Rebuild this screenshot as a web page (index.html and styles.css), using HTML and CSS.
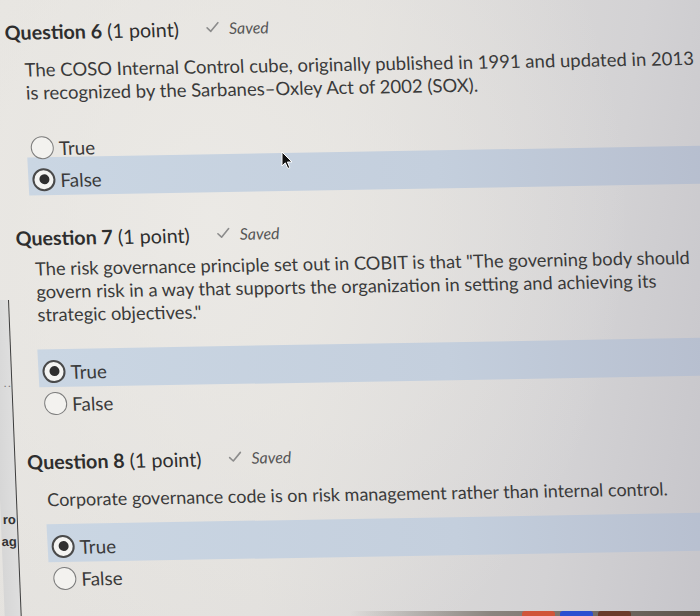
FILE: index.html
```html
<!DOCTYPE html>
<html lang="en">
<head>
<meta charset="utf-8">
<title>Quiz</title>
<link rel="stylesheet" href="styles.css">
</head>
<body>
<div class="screen">
  <div class="quiz">
    <section class="question q6">
      <div class="q-head">
        <h2 class="q-title"><span class="q-num">Question 6</span> (1 point)</h2>
        <span class="saved"><svg class="check" viewBox="0 0 14 12" width="14" height="12"><path d="M1.5 6.5 L5 10 L12.5 1.5" fill="none" stroke="#8c8c8c" stroke-width="1.6" stroke-linecap="round" stroke-linejoin="round"/></svg>Saved</span>
      </div>
      <p class="q-text">The COSO Internal Control cube, originally published in 1991 and updated in 2013<br>is recognized by the Sarbanes–Oxley Act of 2002 (SOX).</p>
      <ul class="answers">
        <li class="answer"><span class="radio"></span><span class="label">True</span></li>
        <li class="answer selected"><span class="radio"></span><span class="label">False</span></li>
      </ul>
    </section>

    <section class="question q7">
      <div class="q-head">
        <h2 class="q-title"><span class="q-num">Question 7</span> (1 point)</h2>
        <span class="saved"><svg class="check" viewBox="0 0 14 12" width="14" height="12"><path d="M1.5 6.5 L5 10 L12.5 1.5" fill="none" stroke="#8c8c8c" stroke-width="1.6" stroke-linecap="round" stroke-linejoin="round"/></svg>Saved</span>
      </div>
      <p class="q-text">The risk governance principle set out in COBIT is that "The governing body should<br>govern risk in a way that supports the organization in setting and achieving its<br>strategic objectives."</p>
      <ul class="answers">
        <li class="answer selected"><span class="radio"></span><span class="label">True</span></li>
        <li class="answer"><span class="radio"></span><span class="label">False</span></li>
      </ul>
    </section>

    <section class="question q8">
      <div class="q-head">
        <h2 class="q-title"><span class="q-num">Question 8</span> (1 point)</h2>
        <span class="saved"><svg class="check" viewBox="0 0 14 12" width="14" height="12"><path d="M1.5 6.5 L5 10 L12.5 1.5" fill="none" stroke="#8c8c8c" stroke-width="1.6" stroke-linecap="round" stroke-linejoin="round"/></svg>Saved</span>
      </div>
      <p class="q-text">Corporate governance code is on risk management rather than internal control.</p>
      <ul class="answers">
        <li class="answer selected"><span class="radio"></span><span class="label">True</span></li>
        <li class="answer"><span class="radio"></span><span class="label">False</span></li>
      </ul>
    </section>
  </div>

  <div class="backwin">
    <span class="dots">..</span>
    <span class="frag frag-ro">ro</span>
    <span class="frag frag-ag">ag</span>
  </div>

  <svg class="pointer" viewBox="0 0 12 19" width="12" height="19"><path d="M1 1 L1 15 L4.3 11.8 L6.8 17.5 L8.8 16.6 L6.4 11 L11 11 Z" fill="#111" stroke="#fff" stroke-width="1" stroke-linejoin="round"/></svg>

  <div class="dock">
    <span class="dock-icon red"></span>
    <span class="dock-icon blue"></span>
    <span class="dock-icon brown"></span>
  </div>
</div>
</body>
</html>
```

FILE: styles.css
```css
html, body {
  margin: 0;
  padding: 0;
}

body {
  width: 700px;
  height: 616px;
  overflow: hidden;
  font-family: Lato, "Open Sans", "Liberation Sans", sans-serif;
  color: #3a3a3a;
  background:
    radial-gradient(ellipse 420px 500px at 30% 35%, rgba(236, 234, 230, 0.9), rgba(236, 234, 230, 0) 100%),
    linear-gradient(100deg, #e6e4e0 0%, #e1dfdc 45%, #d3d2d4 80%, #c6c5ca 100%);
}

.screen {
  position: relative;
  width: 700px;
  height: 616px;
  overflow: hidden;
}

.quiz {
  width: 760px;
  padding: 21px 0 0 3px;
  transform-origin: 0 0;
  transform: rotate(-1deg) skewX(2deg);
}

.question {
  margin: 0;
}

.q-head {
  display: flex;
  align-items: center;
  gap: 27px;
  height: 24px;
}

.q-title {
  margin: 0;
  font-size: 19.7px;
  line-height: 24px;
  font-weight: 400;
  color: #2e2e2e;
  white-space: nowrap;
}

.q-num {
  font-weight: 700;
}

.saved {
  display: flex;
  align-items: center;
  gap: 9px;
  font-size: 16px;
  font-style: italic;
  color: #565656;
  margin-top: -4px;
}

.check {
  display: block;
}

.q-text {
  margin: 14px 0 0 18px;
  font-size: 18.5px;
  line-height: 23px;
  color: #3a3a3a;
  white-space: nowrap;
}

.answers {
  list-style: none;
  margin: 27px 0 0 16px;
  padding: 0;
}

.answer {
  display: flex;
  align-items: center;
  height: 32px;
  padding-left: 4px;
  gap: 5px;
  font-size: 18.8px;
  color: #3a3a3a;
}

.answer.selected {
  box-sizing: content-box;
  margin-top: -6px;
  padding-top: 6px;
  background: linear-gradient(90deg, #cad6e3 0%, #c4cfdd 55%, #b3bacb 100%);
}

.radio {
  box-sizing: border-box;
  width: 23px;
  height: 23px;
  border-radius: 50%;
  border: 1.5px solid #7c7c7c;
  background: #f3f2ef;
  display: flex;
  align-items: center;
  justify-content: center;
  flex: none;
}

.selected .radio {
  border: 2px solid #4a4a4a;
  background: #f4f4f2;
}

.selected .radio::after {
  content: "";
  width: 10px;
  height: 10px;
  border-radius: 50%;
  background: #2f2f2f;
}

.q7 {
  margin-top: 31px;
}

.q7 .q-text {
  margin-top: 7px;
  font-size: 18.3px;
}

.q7 .answers {
  margin-top: 29px;
}

.q8 {
  margin-top: 31px;
}

.q8 .q-text {
  font-size: 18px;
}

.q8 .answers {
  margin-top: 19px;
}

/* partial window behind, at the left edge of the photo */
.backwin {
  position: absolute;
  left: -8px;
  top: 300px;
  width: 16px;
  height: 330px;
  border-right: 1.5px solid #3c3c3c;
  background: linear-gradient(90deg, #d6d6d6, #dedede);
  transform-origin: 100% 0;
  transform: skewX(2.3deg);
  font-family: "Liberation Sans", Arial, sans-serif;
}

.frag {
  position: absolute;
  right: 1px;
  font-size: 13px;
  font-weight: 700;
  color: #333;
  line-height: 14px;
}

.frag-ro { top: 213px; }
.frag-ag { top: 235px; }

.dots {
  position: absolute;
  left: 8px;
  top: 76px;
  font-size: 12px;
  color: #777;
  letter-spacing: 1px;
}

.pointer {
  position: absolute;
  left: 281px;
  top: 151px;
}

.dock {
  position: absolute;
  right: 0;
  bottom: 0;
  width: 350px;
  height: 5px;
  display: flex;
  gap: 5px;
  padding-left: 172px;
  box-sizing: border-box;
  background: linear-gradient(90deg, rgba(90, 80, 70, 0) 0%, rgba(90, 80, 70, 0.6) 40%, #5e554c 100%);
}

.dock-icon {
  width: 33px;
  height: 5px;
  border-radius: 3px 3px 0 0;
}

.dock-icon.red { background: #d0553a; }
.dock-icon.blue { background: #2c4fd0; }
.dock-icon.brown { background: #6a3a2a; }
```
